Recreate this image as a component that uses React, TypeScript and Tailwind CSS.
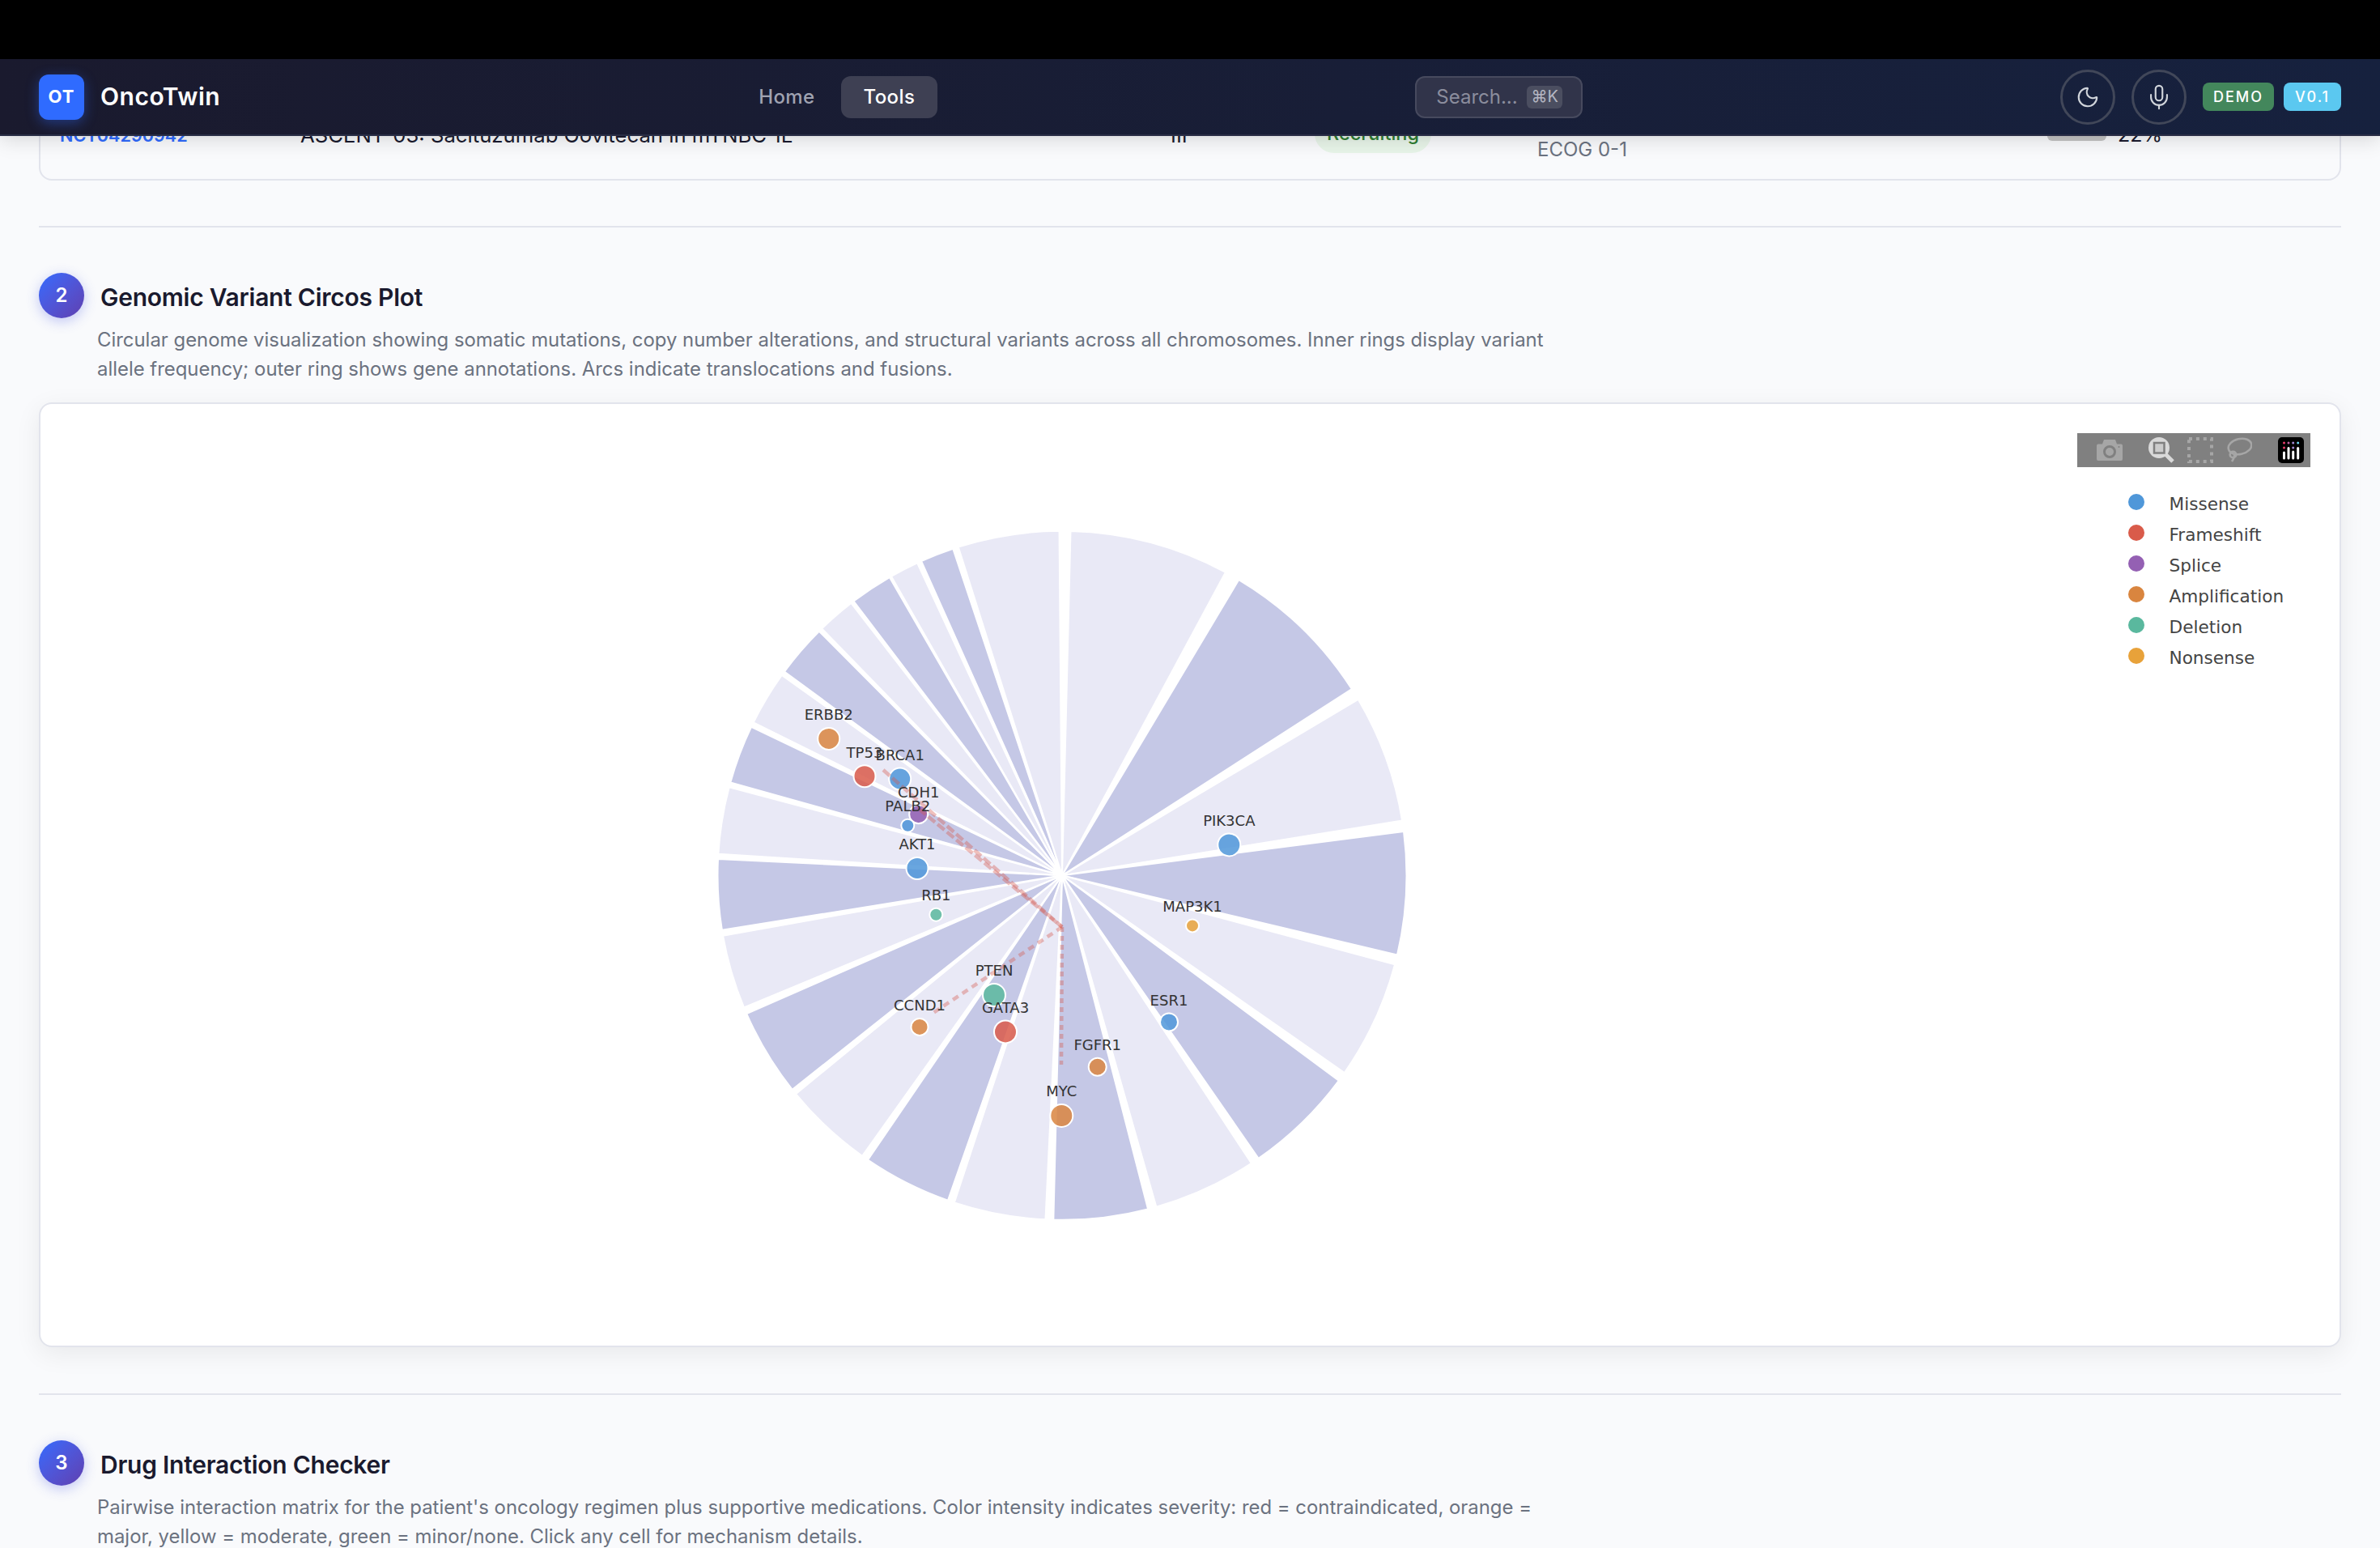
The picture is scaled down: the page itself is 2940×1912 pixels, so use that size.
import { Mic, Moon } from "lucide-react";

const CX = 1312;
const CY = 1082.3;
const RADIUS = 425.5;

// start / end angle of each chromosome wedge, clockwise from 12 o'clock
const wedges: [number, number][] = [
  [1.55, 28.2],
  [31, 57.1],
  [59.4, 80.7],
  [82.8, 103.2],
  [105.1, 124.8],
  [126.7, 145.1],
  [146.8, 164],
  [165.7, 181.3],
  [182.9, 198.1],
  [199.5, 214.2],
  [215.6, 230.5],
  [231.7, 246.2],
  [247.6, 259.8],
  [261, 272.6],
  [273.7, 284.7],
  [285.8, 295.4],
  [296.5, 305.4],
  [306.4, 315],
  [315.9, 322.1],
  [322.9, 329.8],
  [330.4, 335],
  [336, 341.4],
  [342.6, 359.4],
];

const colors = {
  missense: "#4f97d9",
  frameshift: "#d95b4a",
  splice: "#9460b3",
  amplification: "#d9853f",
  deletion: "#5ab89e",
  nonsense: "#e8a23a",
};

const genes = [
  { name: "ERBB2", x: 1023.7, y: 913.4, r: 13.5, color: colors.amplification },
  { name: "TP53", x: 1068, y: 959.7, r: 13.5, color: colors.frameshift },
  { name: "BRCA1", x: 1111.7, y: 963, r: 13.5, color: colors.missense },
  { name: "CDH1", x: 1134.7, y: 1006.7, r: 11.5, color: colors.splice },
  { name: "PALB2", x: 1121.3, y: 1020.7, r: 8, color: colors.missense },
  { name: "AKT1", x: 1133, y: 1073.4, r: 13.5, color: colors.missense },
  { name: "RB1", x: 1156.3, y: 1130.7, r: 8, color: colors.deletion },
  { name: "PTEN", x: 1228, y: 1230, r: 14, color: colors.deletion },
  { name: "CCND1", x: 1136, y: 1269.4, r: 10.5, color: colors.amplification },
  { name: "GATA3", x: 1242, y: 1275.4, r: 14, color: colors.frameshift },
  { name: "MYC", x: 1311.3, y: 1379, r: 14, color: colors.amplification },
  { name: "FGFR1", x: 1355.7, y: 1318.7, r: 11, color: colors.amplification },
  { name: "ESR1", x: 1444, y: 1263.4, r: 11, color: colors.missense },
  { name: "MAP3K1", x: 1473, y: 1144.4, r: 8, color: colors.nonsense },
  { name: "PIK3CA", x: 1518.3, y: 1044.4, r: 14, color: colors.missense },
];

const legend = [
  { label: "Missense", color: colors.missense, y: 621 },
  { label: "Frameshift", color: colors.frameshift, y: 659 },
  { label: "Splice", color: colors.splice, y: 697 },
  { label: "Amplification", color: colors.amplification, y: 735 },
  { label: "Deletion", color: colors.deletion, y: 773 },
  { label: "Nonsense", color: colors.nonsense, y: 811 },
];

function wedgePath(start: number, end: number) {
  const a = ((start - 0.135 - 90) * Math.PI) / 180;
  const b = ((end + 0.135 - 90) * Math.PI) / 180;
  const x1 = CX + RADIUS * Math.cos(a);
  const y1 = CY + RADIUS * Math.sin(a);
  const x2 = CX + RADIUS * Math.cos(b);
  const y2 = CY + RADIUS * Math.sin(b);
  return `M${CX} ${CY}L${x1} ${y1}A${RADIUS} ${RADIUS} 0 0 1 ${x2} ${y2}Z`;
}

function CircosChart() {
  return (
    <svg viewBox="50 500 2840 1163" className="block h-[1163px] w-[2840px] font-['DejaVu_Sans',sans-serif]">
      {wedges.map(([start, end], i) => (
        <path
          key={start}
          d={wedgePath(start, end)}
          fill={i % 2 === 0 ? "#e9e9f6" : "#c5c8e6"}
          stroke="#ffffff"
          strokeWidth={2}
        />
      ))}
      {genes.map((gene) => (
        <circle
          key={gene.name}
          cx={gene.x}
          cy={gene.y}
          r={gene.r}
          fill={gene.color}
          fillOpacity={0.85}
          stroke="#ffffff"
          strokeWidth={2}
        />
      ))}
      <g fill="none" stroke="#d65a50" strokeOpacity={0.38} strokeWidth={4.5}>
        <path d="M1091 952L1312 1146" strokeDasharray="11 4" />
        <path d="M1135 1000L1312 1146" strokeDasharray="11 4" />
        <path d="M1312 1146L1151.7 1252.7" strokeDasharray="8 6" />
        <path d="M1312 1146L1311 1316" strokeDasharray="6 5" />
      </g>
      {genes.map((gene) => (
        <text
          key={gene.name}
          x={gene.x}
          y={gene.y - gene.r - 9.7}
          textAnchor="middle"
          fontSize={18}
          fill="#333333"
        >
          {gene.name}
        </text>
      ))}
      {legend.map((item) => (
        <g key={item.label}>
          <circle cx={2639} cy={item.y} r={10} fill={item.color} />
          <text x={2679.5} y={item.y + 9.5} fontSize={21.6} fill="#444444">
            {item.label}
          </text>
        </g>
      ))}
    </svg>
  );
}

function ModeBar() {
  return (
    <div className="absolute right-9 top-9 flex h-[42px] w-[288px] items-center bg-[#808080] pl-6">
      <svg viewBox="0 0 32 32" className="h-8 w-8">
        <path
          d="M2 8.5h5l2-5.5h14l2 5.5h5a2 2 0 0 1 2 2V27a2 2 0 0 1-2 2H2a2 2 0 0 1-2-2V10.5a2 2 0 0 1 2-2z"
          fill="#a6a6a6"
        />
        <circle cx={16} cy={18} r={6.5} fill="none" stroke="#808080" strokeWidth={3} />
        <circle cx={27.5} cy={12} r={1} fill="#808080" />
      </svg>
      <svg viewBox="0 0 32 32" className="ml-8 h-8 w-8">
        <circle cx={13} cy={13} r={13} fill="#d9d9d9" />
        <path d="M21 21L30 30" stroke="#d9d9d9" strokeWidth={5} />
        <rect x={7} y={7} width={12.5} height={12.5} fill="#cccccc" stroke="#808080" strokeWidth={2.5} />
      </svg>
      <svg viewBox="0 0 32 32" className="ml-4 h-8 w-8">
        <rect x={2} y={2} width={28} height={28} fill="none" stroke="#a6a6a6" strokeWidth={4} strokeDasharray="4 4.9" />
      </svg>
      <svg viewBox="0 0 32 32" className="ml-4 h-8 w-8">
        <g fill="none" stroke="#a6a6a6" strokeWidth={2.6}>
          <ellipse cx={17} cy={11.5} rx={14.5} ry={9.5} transform="rotate(-12 17 11.5)" />
          <circle cx={8.5} cy={21.5} r={3.8} />
          <path d="M10 20c1 4-1 7-3 10" />
        </g>
      </svg>
      <svg viewBox="0 0 32 32" className="ml-8 h-8 w-8">
        <rect width={32} height={32} rx={5} fill="#000000" />
        <circle cx={7.5} cy={7} r={1.5} fill="#ef3d6d" />
        <circle cx={13} cy={7} r={1.5} fill="#b85f9f" />
        <circle cx={18.7} cy={7} r={1.5} fill="#a58ad6" />
        <circle cx={24.7} cy={7} r={1.5} fill="#6ad6f0" />
        <circle cx={7.5} cy={13} r={1.5} fill="#ef3d6d" />
        <circle cx={18.7} cy={13} r={1.5} fill="#a58ad6" />
        <g stroke="#ffffff" strokeWidth={3} strokeLinecap="round">
          <path d="M7.5 19v7" />
          <path d="M13 13.5v12.5" />
          <path d="M18.7 18v8" />
          <path d="M24.7 13.5v12.5" />
        </g>
      </svg>
    </div>
  );
}

function SectionHeading({ step, title, lines }: { step: number; title: string; lines: string[] }) {
  return (
    <div>
      <div className="flex items-center gap-5">
        <div className="flex h-14 w-14 items-center justify-center rounded-full bg-linear-to-br from-[#2f6bff] to-[#5e3fb0] text-2xl font-semibold text-white shadow-[0_4px_16px_rgba(60,80,230,0.3)]">
          {step}
        </div>
        <h2 className="pt-1 text-[30px] font-semibold leading-10 tracking-[-0.25px] text-[#1a1a2e]">{title}</h2>
      </div>
      <p className="ml-[72px] mt-[9px] text-[23.9px] leading-9 text-[#6b7280]">
        {lines.map((line) => (
          <span key={line} className="block">
            {line}
          </span>
        ))}
      </p>
    </div>
  );
}

export default function App() {
  return (
    <div className="h-screen overflow-hidden bg-[#f9fafc] font-['Inter',sans-serif]">
      <div className="h-[73px] bg-black" />
      <header className="relative z-10 flex h-[95px] items-center border-b-2 border-[#2a2e46] bg-linear-to-r from-[#1a1a2e] to-[#16213e] px-12 shadow-[0_4px_24px_rgba(0,0,0,0.15)]">
        <div className="flex items-center gap-5">
          <div className="flex h-14 w-14 items-center justify-center rounded-xl bg-[#2f6bff] text-[22px] font-bold tracking-wider text-white shadow-[0_4px_16px_rgba(47,107,255,0.4)]">
            OT
          </div>
          <span className="text-[30px] font-semibold tracking-[0.5px] text-white">OncoTwin</span>
        </div>
        <nav className="ml-[637px] flex gap-1 text-2xl font-medium tracking-[0.4px]">
          <a className="flex h-[52px] items-center rounded-xl px-7 text-[#a0a3b1]">Home</a>
          <a className="flex h-[52px] items-center rounded-xl bg-[#3e4053] px-7 text-white">Tools</a>
        </nav>
        <div className="ml-[590px] flex h-[52px] w-[207px] items-center justify-between rounded-xl border-2 border-[#474a5e] bg-[#31344a] pl-6 pr-[23px] text-2xl text-[#8b8d9d]">
          <span>Search...</span>
          <kbd className="flex h-7 w-11 items-center justify-center rounded-md bg-[#4b4e60] font-['Inter',sans-serif] text-[20px] text-[#b4b6c2]">
            ⌘K
          </kbd>
        </div>
        <div className="ml-auto flex items-center">
          <button className="flex h-[68px] w-[68px] items-center justify-center rounded-full border-[3.5px] border-[#414759] text-[#d1d5db]">
            <Moon size={30} strokeWidth={1.7} />
          </button>
          <button className="ml-5 flex h-[68px] w-[68px] items-center justify-center rounded-full border-[3.5px] border-[#414759] text-[#d1d5db]">
            <Mic size={34} strokeWidth={1.5} />
          </button>
          <span className="ml-5 flex h-[35px] w-[88px] items-center justify-center rounded-lg bg-[#43875c] text-lg font-medium tracking-[2px] text-white">
            DEMO
          </span>
          <span className="ml-3 flex h-[35px] w-[71px] items-center justify-center rounded-lg bg-[#5bc8f0] text-lg font-medium tracking-[2px] text-white">
            V0.1
          </span>
        </div>
      </header>

      <main className="px-12">
        <div className="-mt-[57px] grid h-[112px] grid-cols-[297px_1075px_178px_275px_630px_1fr] rounded-b-2xl border-2 border-[#e2e4ec] pl-6 text-[25.7px]">
          <span className="pt-[36px] text-[21.6px] font-semibold leading-9 text-[#2f6bff]">NCT04290942</span>
          <span className="pt-[36px] leading-9 text-[#1a1a2e]">ASCENT-03: Sacituzumab Govitecan in mTNBC 1L</span>
          <span className="pt-[36px] leading-9 text-[#1a1a2e]">III</span>
          <span className="pt-[28px]">
            <span className="inline-block rounded-full bg-[#e8f5e9] px-[15px] py-[6px] text-[23.5px] font-medium leading-9 text-[#2e7d32]">
              Recruiting
            </span>
          </span>
          <span className="pt-[54px] text-2xl leading-9 text-[#6b7280]">ECOG 0-1</span>
          <span className="flex items-start gap-[14px] pt-[35px]">
            <span className="mt-[2px] h-6 w-[73px] rounded-md bg-[#c4c4c4]" />
            <span className="text-[25px] leading-9 text-[#1a1a2e]">22%</span>
          </span>
        </div>

        <hr className="my-14 border-t-2 border-[#e2e4ec]" />

        <SectionHeading
          step={2}
          title="Genomic Variant Circos Plot"
          lines={[
            "Circular genome visualization showing somatic mutations, copy number alterations, and structural variants across all chromosomes. Inner rings display variant",
            "allele frequency; outer ring shows gene annotations. Arcs indicate translocations and fusions.",
          ]}
        />

        <section className="relative mt-[23px] rounded-2xl border-2 border-[#e2e4ec] bg-white shadow-[0_8px_32px_rgba(0,0,0,0.07)]">
          <CircosChart />
          <ModeBar />
        </section>

        <hr className="mb-14 mt-[57px] border-t-2 border-[#e2e4ec]" />

        <SectionHeading
          step={3}
          title="Drug Interaction Checker"
          lines={[
            "Pairwise interaction matrix for the patient's oncology regimen plus supportive medications. Color intensity indicates severity: red = contraindicated, orange =",
            "major, yellow = moderate, green = minor/none. Click any cell for mechanism details.",
          ]}
        />
      </main>
    </div>
  );
}
